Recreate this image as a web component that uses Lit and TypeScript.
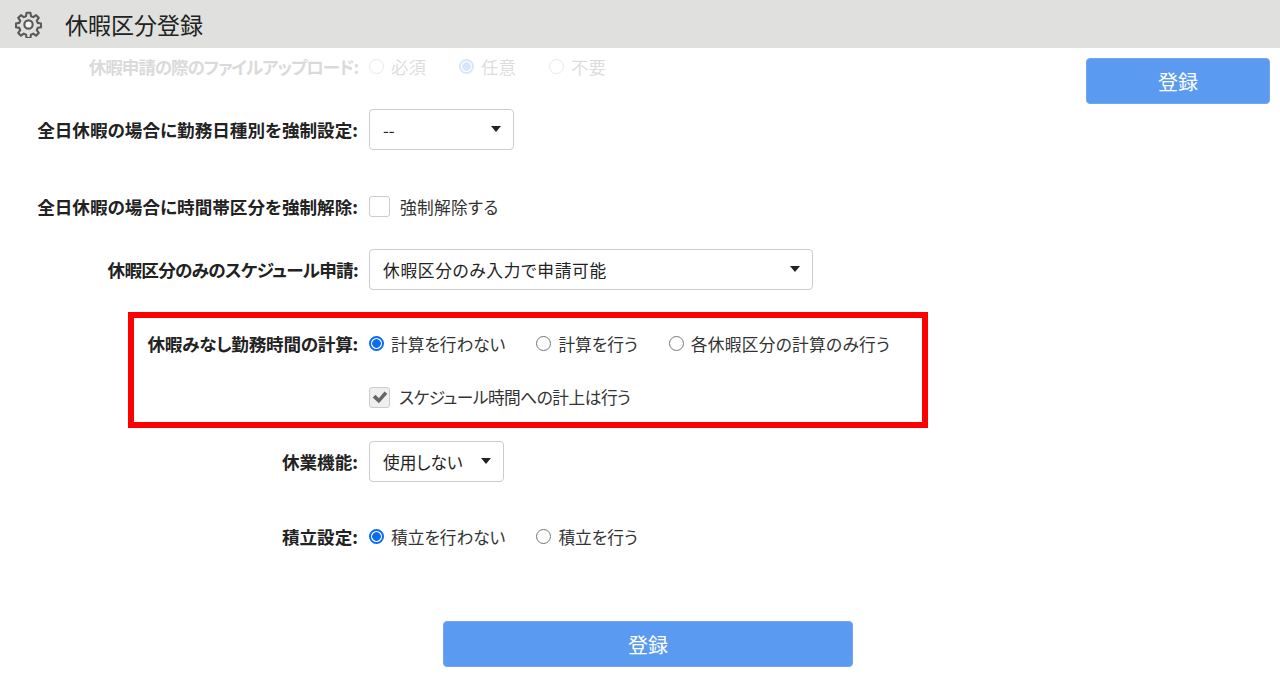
import { LitElement, html, css, svg } from "lit";
import { customElement } from "lit/decorators.js";

const gear = svg`<svg class="gear" viewBox="0 0 24 24" fill="none" stroke="#5a5a5a" stroke-width="1.9" stroke-linejoin="round"><circle cx="12" cy="12" r="3.7" fill="#f4f4f3"/><path d="M10.3 1.6h3.4l.5 3 2 .85 2.5-1.75 2.4 2.4-1.75 2.5.85 2 3 .5v3.4l-3 .5-.85 2 1.75 2.5-2.4 2.4-2.5-1.75-2 .85-.5 3h-3.4l-.5-3-2-.85-2.5 1.75-2.4-2.4 1.75-2.5-.85-2-3-.5v-3.4l3-.5.85-2-1.75-2.5 2.4-2.4 2.5 1.75 2-.85z"/></svg>`;

@customElement("app-root")
export class AppRoot extends LitElement {
  static styles = css`
    :host { display: block; width: 1280px; height: 679px; overflow: hidden; background: #fff; color: #333;
      font-family: "Noto Sans CJK JP", sans-serif; font-size: 16.7px; font-feature-settings: "palt"; }
    * { box-sizing: border-box; }
    .header { height: 48px; background: #e0e0de; display: flex; align-items: center; padding-left: 15px; gap: 23px; }
    .gear { width: 27px; height: 27px; display: block; }
    .title { font-size: 23px; color: #222; }
    .body { display: flex; height: 631px; }
    .form { width: 928px; flex: none; display: flex; flex-direction: column; }
    .side { flex: 1; padding: 10px 0 0 158px; }
    .row { display: flex; align-items: center; }
    .label { width: 358px; flex: none; text-align: right; font-weight: 700; color: #222; font-size: 17.6px; white-space: nowrap; }
    .ctrl { margin-left: 11px; display: flex; align-items: center; color: #333; white-space: nowrap; }
    .faded { height: 36px; opacity: 0.16; }
    .faded .ctrl { font-size: 17.5px; }
    .faded .opt { margin-right: 33px; }
    .tight-xl { letter-spacing: -1.1px; }
    .tight-l { letter-spacing: -0.7px; }
    .tight-s { letter-spacing: -0.25px; }
    .wide { letter-spacing: 0.7px; }
    .wide-s { letter-spacing: 0.3px; }
    .tight-c { letter-spacing: -0.5px; }
    .r2 { margin-top: 25px; }
    .r3 { margin-top: 36px; height: 41px; }
    .r4 { margin-top: 22px; }
    .sel { height: 41px; border: 1px solid #ccc; border-radius: 4px; background: #fff; display: flex; align-items: center;
      justify-content: space-between; padding: 0 12px 0 13px; color: #222; }
    .arrow { width: 0; height: 0; border-left: 5px solid transparent; border-right: 5px solid transparent; border-top: 6px solid #222; margin-top: -2px; }
    .w145 { width: 145px; } .w444 { width: 444px; } .w135 { width: 135px; }
    .opt { display: inline-flex; align-items: center; margin-right: 31px; }
    .radio { width: 15px; height: 15px; border: 1px solid #777; border-radius: 50%; margin-right: 7px; background: #fff; flex: none; }
    .radio.on { border: 2px solid #0a6cf0; background: radial-gradient(circle, #0a6cf0 0 4px, #fff 4.6px); }
    .check { width: 21px; height: 21px; border: 1px solid #ccc; border-radius: 3px; flex: none; margin-right: 10px; background: #fff; display: flex; align-items: center; justify-content: center; }
    .check.dis { background: #efefef; margin-right: 9px; }
    .check svg { width: 18px; height: 18px; display: block; }
    .box { margin-top: 22px; height: 116px; border: 6px solid #ff0000; margin-left: 128px; width: 800px; display: flex; flex-direction: column; }
    .box .label { width: 224px; }
    .box .row.a { height: 53px; margin-top: 0; }
    .box .row.b { height: 53px; padding-top: 3px; }
    .r6 { margin-top: 13px; }
    .r7 { margin-top: 34px; height: 41px; }
    .btn { background: #5a9af0; color: #fff; border: 1px solid #6ea6f2; border-radius: 4px; display: flex; align-items: center; justify-content: center; font-size: 20px; padding: 0; }
    .top { width: 184px; height: 46px; }
    .bottom { width: 410px; height: 46px; margin: 64px 0 0 443px; }
  `;

  private opt(t: string, on = false, cls = "") {
    return html`<span class="opt"><span class="radio ${on ? "on" : ""}"></span><span class="${cls}">${t}</span></span>`;
  }

  private sel(t: string, cls: string, textCls = "") {
    return html`<div class="sel ${cls}"><span class="${textCls}">${t}</span><span class="arrow"></span></div>`;
  }

  render() {
    return html`
      <div class="header">${gear}<div class="title">休暇区分登録</div></div>
      <div class="body">
        <div class="form">
          <div class="row faded">
            <div class="label tight-xl">休暇申請の際のファイルアップロード:</div>
            <div class="ctrl">${this.opt("必須")}${this.opt("任意", true)}${this.opt("不要")}</div>
          </div>
          <div class="row r2">
            <div class="label">全日休暇の場合に勤務日種別を強制設定:</div>
            <div class="ctrl">${this.sel("--", "w145")}</div>
          </div>
          <div class="row r3">
            <div class="label">全日休暇の場合に時間帯区分を強制解除:</div>
            <div class="ctrl"><span class="check"></span><span class="wide-s">強制解除する</span></div>
          </div>
          <div class="row r4">
            <div class="label tight-l">休暇区分のみのスケジュール申請:</div>
            <div class="ctrl">${this.sel("休暇区分のみ入力で申請可能", "w444", "wide")}</div>
          </div>
          <div class="box">
            <div class="row a">
              <div class="label tight-s">休暇みなし勤務時間の計算:</div>
              <div class="ctrl">${this.opt("計算を行わない", true)}${this.opt("計算を行う")}${this.opt("各休暇区分の計算のみ行う", false, "wide-s")}</div>
            </div>
            <div class="row b">
              <div class="label"></div>
              <div class="ctrl"><span class="check dis"><svg viewBox="0 0 16 16"><path d="M1.5 8.5l2.5-2.5 3 3 5-6 2.5 2.2-7.5 8.3z" fill="#666"/></svg></span><span class="tight-c">スケジュール時間への計上は行う</span></div>
            </div>
          </div>
          <div class="row r6">
            <div class="label">休業機能:</div>
            <div class="ctrl">${this.sel("使用しない", "w135")}</div>
          </div>
          <div class="row r7">
            <div class="label">積立設定:</div>
            <div class="ctrl">${this.opt("積立を行わない", true)}${this.opt("積立を行う")}</div>
          </div>
          <div class="btn bottom">登録</div>
        </div>
        <div class="side"><div class="btn top">登録</div></div>
      </div>
    `;
  }
}
